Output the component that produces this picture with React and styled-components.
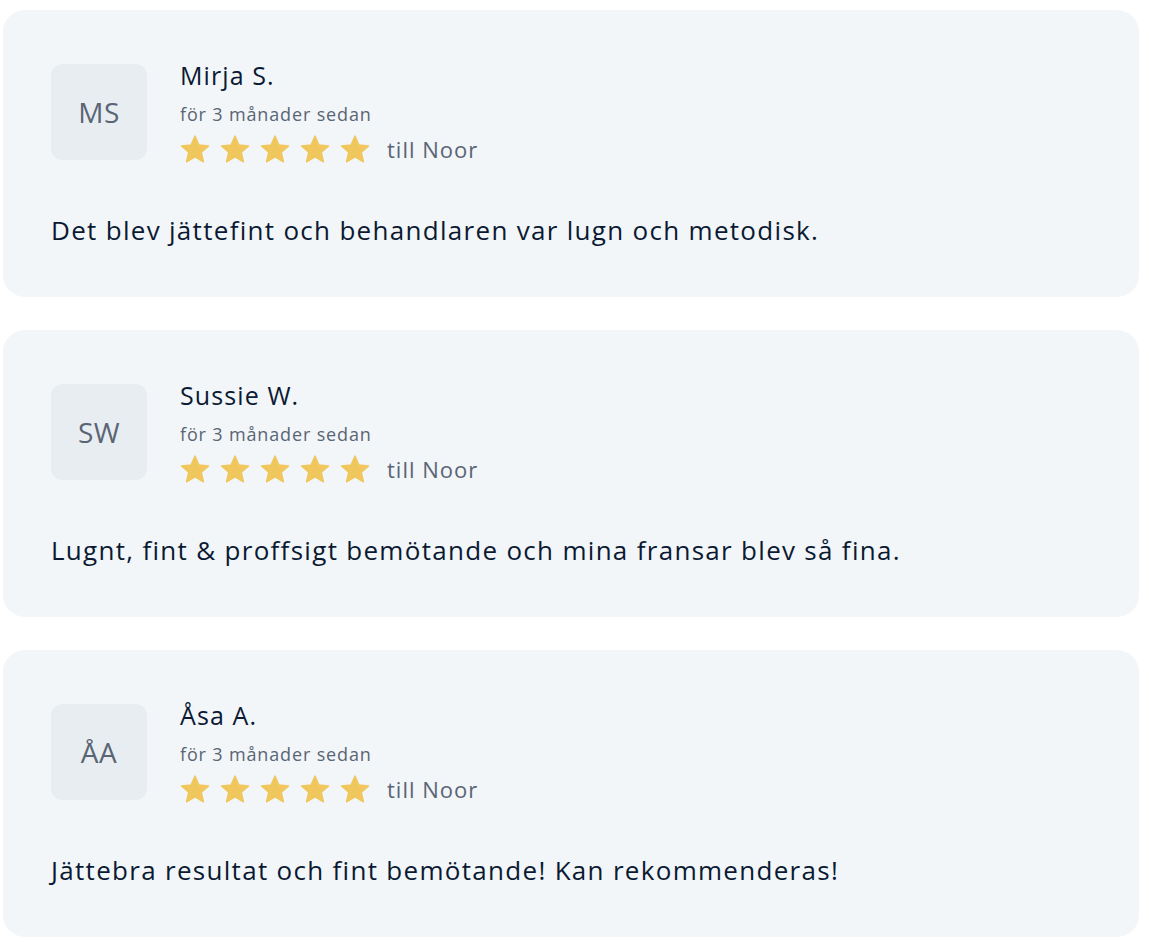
import React from 'react'
import styled, { createGlobalStyle } from 'styled-components'

const GlobalStyle = createGlobalStyle`
  html, body {
    margin: 0;
    padding: 0;
    background: #ffffff;
  }
  body {
    font-family: "Open Sans", "Liberation Sans", sans-serif;
    color: #0b1a32;
  }
`

const reviews = [
  { id: 1, initials: 'MS', name: 'Mirja S.', when: 'för 3 månader sedan', rating: 5, staff: 'Noor', text: 'Det blev jättefint och behandlaren var lugn och metodisk.' },
  { id: 2, initials: 'SW', name: 'Sussie W.', when: 'för 3 månader sedan', rating: 5, staff: 'Noor', text: 'Lugnt, fint & proffsigt bemötande och mina fransar blev så fina.' },
  { id: 3, initials: 'ÅA', name: 'Åsa A.', when: 'för 3 månader sedan', rating: 5, staff: 'Noor', text: 'Jättebra resultat och fint bemötande! Kan rekommenderas!' },
]

const List = styled.div`
  display: flex;
  flex-direction: column;
  gap: 33px;
  padding: 10px 10px 5px 3px;
`

const Card = styled.article`
  background: #f2f6f9;
  border-radius: 22px;
  padding: 54px 48px 50px;
  box-sizing: border-box;
  height: 287px;
`

const Header = styled.div`
  display: flex;
  align-items: flex-start;
  gap: 33px;
`

const Avatar = styled.div`
  width: 96px;
  height: 96px;
  flex: none;
  border-radius: 12px;
  background: #e8edf1;
  color: #5a6574;
  font-size: 28px;
  letter-spacing: 0.5px;
  display: flex;
  align-items: center;
  justify-content: center;
`

const Info = styled.div`
  display: flex;
  flex-direction: column;
`

const Name = styled.div`
  font-size: 25px;
  line-height: 26px;
  letter-spacing: 1.1px;
  margin-top: -2px;
`

const When = styled.div`
  font-size: 18px;
  line-height: 20px;
  letter-spacing: 0.85px;
  color: #5a6574;
  margin-top: 16px;
`

const RatingRow = styled.div`
  display: flex;
  align-items: center;
  margin-top: 10px;
`

const Stars = styled.div`
  display: flex;
  gap: 10px;
`

const Staff = styled.span`
  font-size: 22px;
  letter-spacing: 1px;
  color: #5a6574;
  margin-left: 17px;
`

const Body = styled.p`
  margin: 51px 0 0;
  font-size: 26px;
  line-height: 30px;
  letter-spacing: 1.3px;
`

function Star() {
  return (
    <svg width="30" height="29" viewBox="0 0 24 23">
      <path
        d="M12 0.8l3.1 7.1 7.7 0.7-5.8 5.1 1.7 7.6L12 17.3l-6.7 4 1.7-7.6L1.2 8.6l7.7-0.7z"
        fill="#f0c75c"
        stroke="#f0c75c"
        strokeWidth="1.2"
        strokeLinejoin="round"
      />
    </svg>
  )
}

function Review({ review }) {
  return (
    <Card>
      <Header>
        <Avatar>{review.initials}</Avatar>
        <Info>
          <Name>{review.name}</Name>
          <When>{review.when}</When>
          <RatingRow>
            <Stars>
              {Array.from({ length: review.rating }).map((_, i) => <Star key={i} />)}
            </Stars>
            <Staff>till {review.staff}</Staff>
          </RatingRow>
        </Info>
      </Header>
      <Body>{review.text}</Body>
    </Card>
  )
}

export default function App() {
  return (
    <>
      <GlobalStyle />
      <List>
        {reviews.map(r => <Review key={r.id} review={r} />)}
      </List>
    </>
  )
}
